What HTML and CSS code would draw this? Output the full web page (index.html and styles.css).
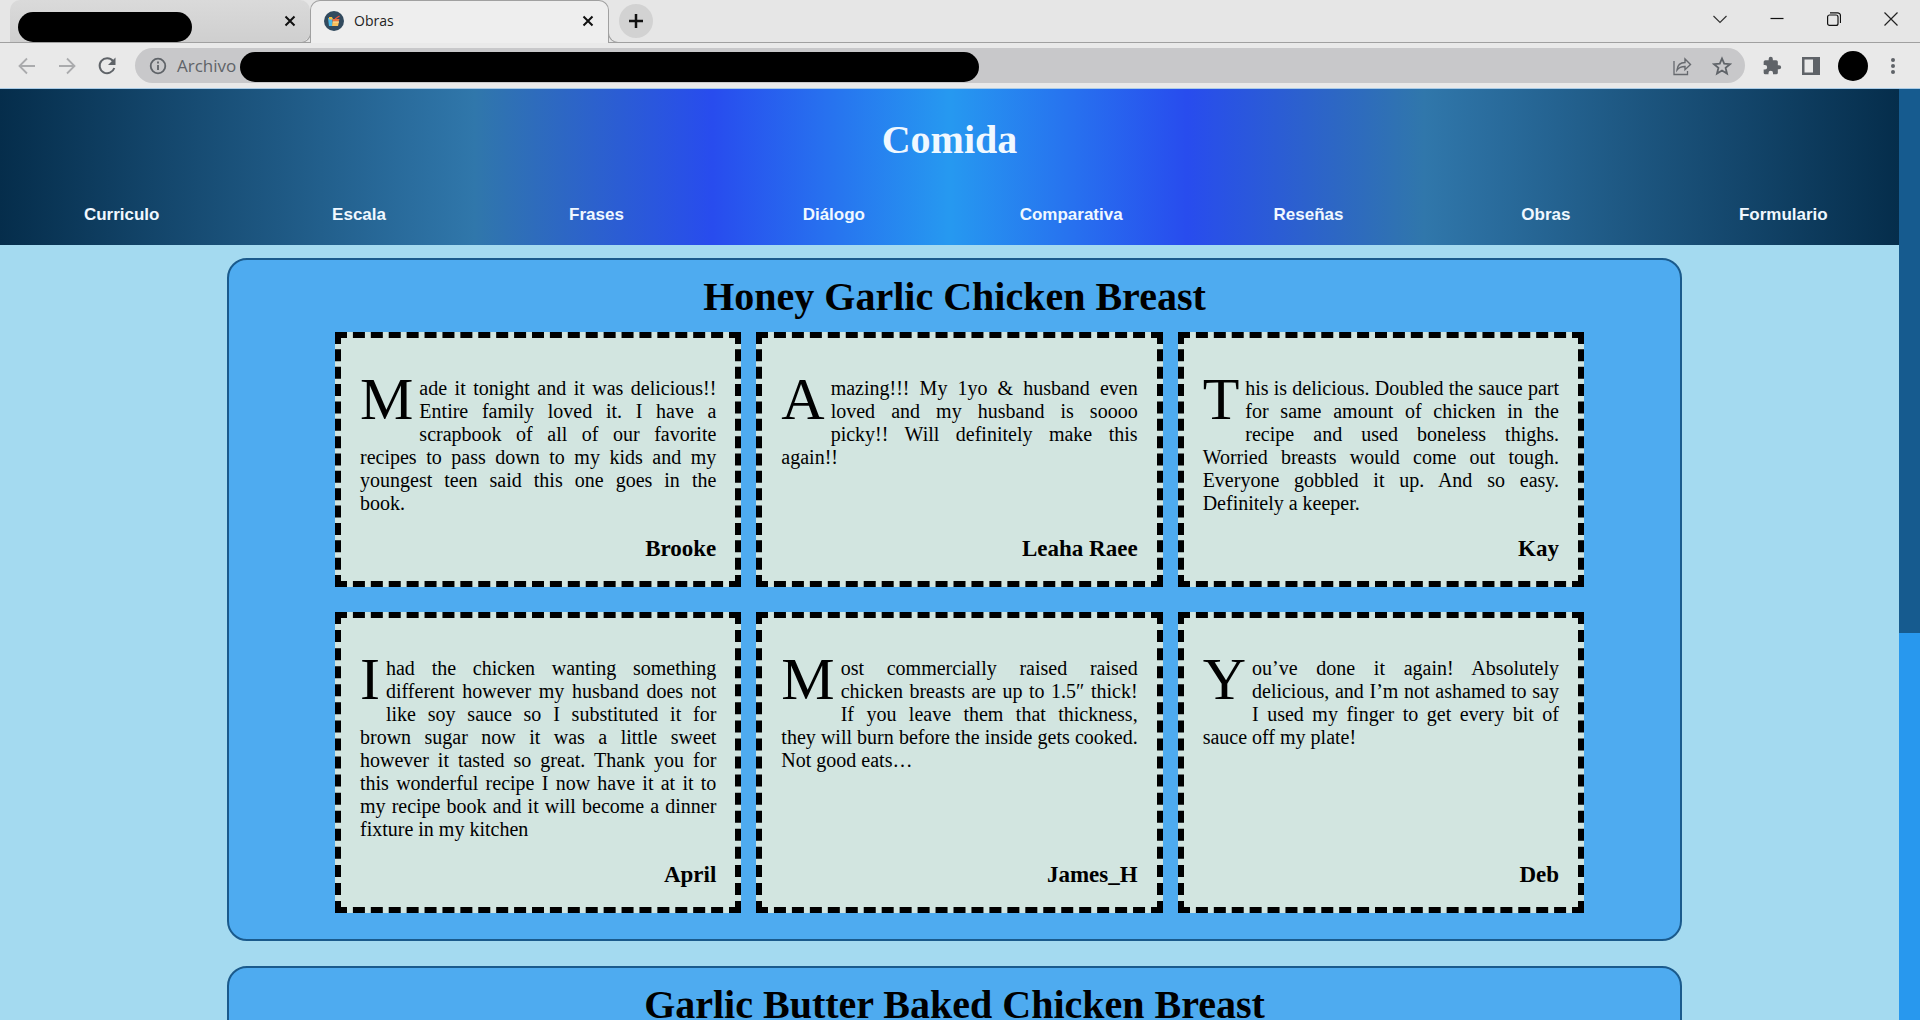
FILE: index.html
```html
<!DOCTYPE html>
<html lang="es">
<head>
<meta charset="utf-8">
<title>Obras</title>
<link rel="stylesheet" href="styles.css">
</head>
<body>
<div class="browser">
  <div class="tab-strip">
    <div class="tab">
      <span class="redacted redacted-title"></span>
      <button class="tab-close" aria-label="Cerrar"><svg width="12" height="12" viewBox="0 0 12 12"><path d="M1.5 1.5l9 9M10.500 1.500l-9 9" stroke="#111" stroke-width="2"/></svg></button>
    </div>
    <div class="tab tab-active">
      <svg class="favicon" width="20" height="20" viewBox="0 0 20 20"><circle cx="10" cy="10" r="10" fill="#324a5e"/><path d="M4 7h4.500v8H5z" fill="#4cb8e4"/><path d="M5 6h3l1 2.500H5z" fill="#f5c243"/><path d="M8.500 8h7l-1 2.500h-6z" fill="#f1743f"/><path d="M8.500 10.500H15l-1 4.500H8z" fill="#f9c05b"/><path d="M11 8l4.500-3" stroke="#f1543f" stroke-width="1.200"/><path d="M9 11h6" stroke="#ffe2a0"/></svg>
      <span class="tab-title">Obras</span>
      <button class="tab-close" aria-label="Cerrar"><svg width="12" height="12" viewBox="0 0 12 12"><path d="M1.500 1.500l9 9M10.500 1.500l-9 9" stroke="#111" stroke-width="2"/></svg></button>
    </div>
    <button class="new-tab" aria-label="Nueva pestaña"><svg width="16" height="16" viewBox="0 0 16 16"><path d="M8 1v14M1 8h14" stroke="#111" stroke-width="2.500"/></svg></button>
    <div class="window-buttons">
      <button aria-label="Buscar pestañas"><svg width="14" height="14" viewBox="0 0 14 14"><path d="M.5 4L7 10.500 13.500 4" fill="none" stroke="#333" stroke-width="1.200"/></svg></button>
      <button aria-label="Minimizar"><svg width="14" height="14" viewBox="0 0 14 14"><path d="M.5 6.500h13" stroke="#111" stroke-width="1.200"/></svg></button>
      <button aria-label="Restaurar"><svg width="14" height="14" viewBox="0 0 14 14"><rect x=".6" y="3" width="10.400" height="10.400" rx="2" fill="none" stroke="#111" stroke-width="1.200"/><path d="M3 .8h7.500a3 3 0 0 1 3 3V11" fill="none" stroke="#111" stroke-width="1.200"/></svg></button>
      <button aria-label="Cerrar ventana"><svg width="14" height="14" viewBox="0 0 14 14"><path d="M.5.5l13 13M13.500.5l-13 13" stroke="#222" stroke-width="1.200"/></svg></button>
    </div>
  </div>
  <div class="toolbar">
    <div class="toolbar-nav">
      <button aria-label="Atrás"><svg width="24" height="24" viewBox="0 0 24 24"><path d="M20 12H5M12 4.500L4.500 12l7.500 7.500" fill="none" stroke="#aaabad" stroke-width="1.800"/></svg></button>
      <button aria-label="Adelante"><svg width="24" height="24" viewBox="0 0 24 24"><path d="M4 12h15M12 4.500l7.500 7.500-7.500 7.500" fill="none" stroke="#aaabad" stroke-width="1.800"/></svg></button>
      <button aria-label="Recargar"><svg width="24" height="24" viewBox="0 0 24 24"><path d="M18 7A7.500 7.500 0 1 0 19.300 14" fill="none" stroke="#5f6368" stroke-width="2"/><path d="M20.500 3.500v7.500H13z" fill="#5f6368"/></svg></button>
    </div>
    <div class="address">
      <svg width="18" height="18" viewBox="0 0 18 18"><circle cx="9" cy="9" r="7.300" fill="none" stroke="#5f6368" stroke-width="1.800"/><path d="M9 8v5M9 4.500v2" stroke="#5f6368" stroke-width="1.800"/></svg>
      <span class="address-label">Archivo</span>
      <span class="redacted redacted-url"></span>
      <button class="share" aria-label="Compartir"><svg width="20" height="20" viewBox="0 0 20 20"><path d="M2 5v13.500h13.500V15" fill="none" stroke="#66696e" stroke-width="1.300"/><path d="M5 14c.5-5 3.500-7.500 8-7.500V3l5.500 5.500-5.500 5.200v-3.200c-3.500 0-6 .8-8 3.500z" fill="none" stroke="#66696e" stroke-width="1.400"/></svg></button>
      <button aria-label="Marcador"><svg width="20" height="20" viewBox="0 0 20 20"><path d="M10 2.500l2.200 5.200 5.800.5-4.400 3.700 1.400 5.600-5-3-5 3 1.400-5.600L2 8.200l5.800-.5z" fill="none" stroke="#5f6368" stroke-width="1.800"/></svg></button>
    </div>
    <div class="toolbar-actions">
      <button aria-label="Extensiones"><svg width="20" height="20" viewBox="0 0 24 24"><path d="M20.500 11H19V7a2 2 0 0 0-2-2h-4V3.500a2.500 2.500 0 0 0-5 0V5H4a2 2 0 0 0-2 2v3.800h1.500a2.700 2.700 0 0 1 0 5.400H2V20a2 2 0 0 0 2 2h3.800v-1.500a2.700 2.700 0 0 1 5.400 0V22H17a2 2 0 0 0 2-2v-4h1.500a2.500 2.500 0 0 0 0-5z" fill="#5f6368"/></svg></button>
      <button aria-label="Panel lateral"><svg width="18" height="18" viewBox="0 0 18 18"><path d="M0 0h18v18H0zM2.500 2.500v13H11v-13z" fill="#5f6368" fill-rule="evenodd"/></svg></button>
      <button class="avatar" aria-label="Perfil"></button>
      <button aria-label="Menú"><svg width="18" height="18" viewBox="0 0 18 18" fill="#5f6368"><circle cx="9" cy="3" r="2"/><circle cx="9" cy="9" r="2"/><circle cx="9" cy="15" r="2"/></svg></button>
    </div>
  </div>
</div>

<div class="viewport">
  <div class="page">
    <header class="site-header">
      <h1 class="site-title">Comida</h1>
      <nav class="site-nav">
        <a href="#">Curriculo</a>
        <a href="#">Escala</a>
        <a href="#">Frases</a>
        <a href="#">Diálogo</a>
        <a href="#">Comparativa</a>
        <a href="#">Reseñas</a>
        <a href="#">Obras</a>
        <a href="#">Formulario</a>
      </nav>
    </header>
    <main class="recipes">
      <section class="recipe">
        <h2>Honey Garlic Chicken Breast</h2>
        <div class="reviews">
          <article class="review">
            <p>Made it tonight and it was delicious!! Entire family loved it. I have a scrapbook of all of our favorite recipes to pass down to my kids and my youngest teen said this one goes in the book.</p>
            <h3>Brooke</h3>
          </article>
          <article class="review">
            <p>Amazing!!! My 1yo &amp; husband even loved and my husband is soooo picky!! Will definitely make this again!!</p>
            <h3>Leaha Raee</h3>
          </article>
          <article class="review">
            <p>This is delicious. Doubled the sauce part for same amount of chicken in the recipe and used boneless thighs. Worried breasts would come out tough. Everyone gobbled it up. And so easy. Definitely a keeper.</p>
            <h3>Kay</h3>
          </article>
          <article class="review">
            <p>I had the chicken wanting something different however my husband does not like soy sauce so I substituted it for brown sugar now it was a little sweet however it tasted so great. Thank you for this wonderful recipe I now have it at it to my recipe book and it will become a dinner fixture in my kitchen</p>
            <h3>April</h3>
          </article>
          <article class="review">
            <p>Most commercially raised raised chicken breasts are up to 1.5″ thick! If you leave them that thickness, they will burn before the inside gets cooked. Not good eats…</p>
            <h3>James_H</h3>
          </article>
          <article class="review">
            <p>You’ve done it again! Absolutely delicious, and I’m not ashamed to say I used my finger to get every bit of sauce off my plate!</p>
            <h3>Deb</h3>
          </article>
        </div>
      </section>
      <section class="recipe">
        <h2>Garlic Butter Baked Chicken Breast</h2>
        <div class="reviews"></div>
      </section>
    </main>
  </div>
  <div class="scrollbar"><div class="scrollbar-thumb"></div></div>
</div>
</body>
</html>
```
FILE: styles.css
```css
* {
  box-sizing: border-box;
}

body {
  margin: 0;
  height: 100vh;
  display: flex;
  flex-direction: column;
  overflow: hidden;
  background: #a4daf0;
  font-family: "Liberation Serif", "Times New Roman", serif;
  font-size: 20px;
}

h1, h2, h3, p {
  margin: 0;
}

/* Browser window */
.browser {
  flex: none;
  background: #e9e9e9;
  border-bottom: 1px solid #a9cbe6;
  font-family: "Open Sans", "Noto Sans", sans-serif;
}

.browser button {
  display: flex;
  align-items: center;
  justify-content: center;
  width: 24px;
  height: 24px;
  padding: 0;
  border: 0;
  background: none;
}

.browser svg {
  flex: none;
}

.tab-strip {
  display: flex;
  align-items: stretch;
  height: 43px;
  padding-left: 10px;
  background: #e6e6e6;
  border-bottom: 1px solid #a0a0a0;
}

.tab {
  display: flex;
  align-items: center;
  width: 300px;
  padding: 0 8px;
  border-radius: 10px 10px 10px 0;
  background: linear-gradient(#dadada, #cfcfcf);
}

.tab-close {
  margin-left: auto;
}

.tab-active {
  position: relative;
  width: 299px;
  margin: 0 0 -1px;
  padding: 0 8px 2px 13px;
  border: 1px solid #a0a0a0;
  border-bottom: 0;
  border-radius: 10px 10px 0 0;
  background: #eee;
}

.tab-active::before,
.tab-active::after {
  content: "";
  position: absolute;
  bottom: 0;
  width: 10px;
  height: 10px;
  border-bottom: 1px solid #a0a0a0;
}

.tab-active::before {
  right: 100%;
  border-right: 1px solid #a0a0a0;
  border-bottom-right-radius: 10px;
}

.tab-active::after {
  left: 100%;
  border-left: 1px solid #a0a0a0;
  border-bottom-left-radius: 10px;
}

.tab-title {
  margin-left: 10px;
  font-size: 14px;
  line-height: 20px;
  color: #222;
}

.redacted {
  display: block;
  border-radius: 15px;
  background: #000;
}

.redacted-title {
  width: 174px;
  height: 30px;
  align-self: flex-end;
}

.browser .new-tab {
  width: 34px;
  height: 34px;
  align-self: center;
  margin-left: 10px;
  border-radius: 50%;
  background: #d2d2d2;
}

.window-buttons {
  display: flex;
  align-items: center;
  gap: 33px;
  height: 38px;
  margin-left: auto;
  padding-right: 17px;
}

.toolbar {
  display: flex;
  align-items: center;
  height: 45px;
  padding: 0 15px;
}

.toolbar-nav {
  display: flex;
  gap: 16px;
}

.address {
  display: flex;
  align-items: center;
  flex: 1;
  height: 35px;
  margin: 0 15px 0 16px;
  padding: 0 11px 0 14px;
  border-radius: 18px;
  background: #c8c8ca;
}

.address-label {
  width: 63px;
  margin-left: 10px;
  font-size: 17px;
  color: #5f6368;
}

.redacted-url {
  width: 48%;
  max-width: 739px;
  height: 30px;
  align-self: flex-end;
  margin-bottom: 1px;
}

.address .share {
  margin-left: auto;
  margin-right: 16px;
}

.toolbar-actions {
  display: flex;
  align-items: center;
  gap: 15px;
}

.browser .avatar {
  width: 30px;
  height: 30px;
  margin-right: -2px;
  border-radius: 50%;
  background: #000;
}

/* Page */
.viewport {
  display: flex;
  flex: 1;
  min-height: 0;
}

.page {
  flex: 1;
  min-width: 0;
  overflow: hidden;
}

.scrollbar {
  width: 21px;
  background: #2898ee;
}

.scrollbar-thumb {
  height: 58.4%;
  background: #165b8f;
}

.site-header {
  padding-top: 28px;
  background: linear-gradient(to right,
    #052d4b 0%, #3077ab 25%, #284cee 37.5%, #2699f0 50%,
    #284cee 62.5%, #3077ab 75%, #052d4b 100%);
}

.site-title {
  font-size: 40px;
  line-height: 46px;
  text-align: center;
  color: #f0f8ff;
}

.site-nav {
  display: grid;
  grid-template-columns: repeat(8, 1fr);
  padding: 42px 0 20px;
}

.site-nav a {
  padding-left: 6px;
  font-family: "Liberation Sans", Arial, sans-serif;
  font-size: 17px;
  font-weight: bold;
  line-height: 20px;
  text-align: center;
  text-decoration: none;
  color: #f0f8ff;
}

.recipes {
  display: flex;
  flex-direction: column;
  gap: 25px;
  padding: 13px 217px 25px 227px;
}

.recipe {
  padding: 14px 96px 26px 106px;
  border: 2px solid #1a5a8c;
  border-radius: 20px;
  background: #4eabf0;
}

.recipe h2 {
  margin: 0 10px 12px 0;
  font-size: 40px;
  line-height: 46px;
  text-align: center;
  white-space: nowrap;
}

.reviews {
  display: grid;
  grid-template-columns: repeat(3, 1fr);
  gap: 25px 15px;
}

.review {
  display: flex;
  flex-direction: column;
  padding: 39px 19px 19px;
  border: 6px dashed #000;
  background: #d2e5e0;
}

.review p {
  margin-bottom: 20px;
  line-height: 23px;
  text-align: justify;
}

.review p::first-letter {
  float: left;
  padding: 0 6px 4px 0;
  font-size: 60px;
  line-height: 44px;
}

.review h3 {
  margin-top: auto;
  font-size: 23px;
  line-height: 27px;
  text-align: right;
}
```
